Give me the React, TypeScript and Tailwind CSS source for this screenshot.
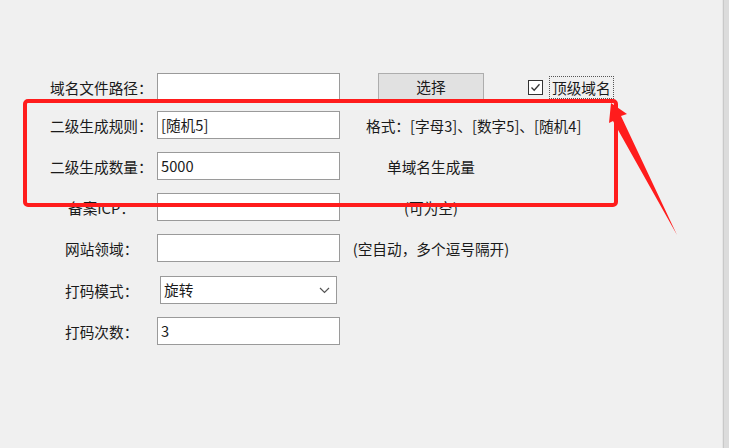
import React from 'react';

const font = "font-['Microsoft_YaHei','Noto_Sans_CJK_SC',sans-serif]";

function Field({ label, pad, value, className = '', children }: { label: string; pad: string; value?: string; className?: string; children?: React.ReactNode }) {
  return (
    <div className={`flex items-center h-[28px] ${className}`}>
      <div className={`w-[157px] shrink-0 ${pad} whitespace-nowrap pt-[2px]`}>{label}</div>
      <div className="w-[183px] h-[28px] shrink-0 bg-white border border-[#9a9a9a] flex items-center pl-[3px] pt-[1px]">
        {value}
      </div>
      {children}
    </div>
  );
}

export default function App() {
  return (
    <div className={`w-[729px] h-[448px] flex bg-[#f0f0f0] text-[14.67px] text-[#1a1a1a] leading-none ${font}`}>
      <div className="relative flex-1 pt-[73px]">
        <Field label="域名文件路径：" pad="pl-[50px]">
          <div className="w-[182px] flex justify-center">
            <button className="w-[106px] h-[28px] bg-[#e1e1e1] border border-[#adadad] pt-[1px]">选择</button>
          </div>
          <div className="flex items-center ml-[6px]">
            <div className="w-[15px] h-[15px] bg-white border border-[#333] flex items-center justify-center">
              <svg width="11" height="11" viewBox="0 0 11 11" fill="none" stroke="#333" strokeWidth="1.3">
                <path d="M1.5 5.5 L4.2 8.3 L9.5 2.2" />
              </svg>
            </div>
            <div className="ml-[6px] h-[23px] px-[2px] flex items-center border border-dotted border-[#555] pt-[2px]">顶级域名</div>
          </div>
        </Field>
        <Field label="二级生成规则：" pad="pl-[50px]" value="[随机5]" className="mt-[10px]">
          <div className="ml-[26px] whitespace-nowrap pt-[2px]">格式：[字母3]、[数字5]、[随机4]</div>
        </Field>
        <Field label="二级生成数量：" pad="pl-[50px]" value="5000" className="mt-[13px]">
          <div className="w-[182px] text-center pt-[2px]">单域名生成量</div>
        </Field>
        <Field label="备案ICP：" pad="pl-[68px]" className="mt-[13px]">
          <div className="w-[182px] text-center pt-[2px]">(可为空)</div>
        </Field>
        <Field label="网站领域：" pad="pl-[65px]" className="mt-[13px]">
          <div className="w-[182px] text-center whitespace-nowrap pt-[2px]">(空自动，多个逗号隔开)</div>
        </Field>
        <div className="flex items-center h-[28px] mt-[14px]">
          <div className="w-[160px] shrink-0 pl-[65px] pt-[2px]">打码模式：</div>
          <div className="w-[177px] h-[28px] bg-white border border-[#9a9a9a] flex items-center justify-between pl-[3px] pr-[6px] pt-[1px]">
            <span>旋转</span>
            <svg width="11" height="7" viewBox="0 0 11 7" fill="none" stroke="#555" strokeWidth="1.2">
              <path d="M1 1 L5.5 5.5 L10 1" />
            </svg>
          </div>
        </div>
        <Field label="打码次数：" pad="pl-[65px]" value="3" className="mt-[13px]" />

        <div className="absolute left-[23px] top-[99px] w-[595px] h-[108px] border-[4.5px] border-[#ff1c1c] rounded-[5px] pointer-events-none" />
        <svg className="absolute left-0 top-0 pointer-events-none" width="722" height="448">
          <polygon points="611,103 627,114 621,116 677,235 613,121 609,123" fill="#ff1c1c" />
        </svg>
      </div>
      <div className="w-[7px] h-full flex">
        <div className="w-[1px] bg-[#e6e6e6]" />
        <div className="w-[1px] bg-[#c9c9c9]" />
        <div className="flex-1 bg-[#dcdcdc]" />
      </div>
    </div>
  );
}
